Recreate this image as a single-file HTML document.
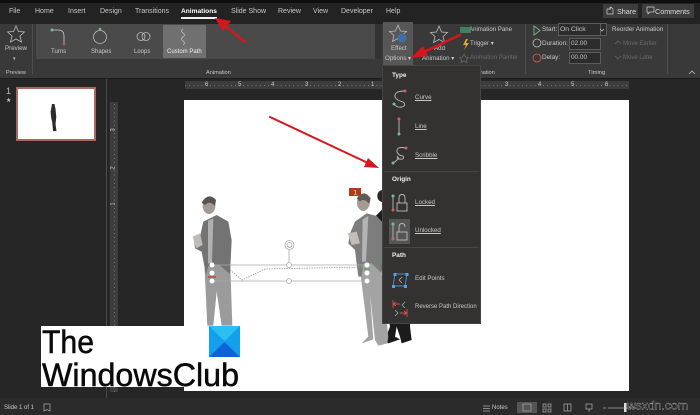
<!DOCTYPE html>
<html><head><meta charset="utf-8"><style>
html,body{margin:0;padding:0}
body{width:700px;height:415px;overflow:hidden;position:relative;background:#262626;font-family:"Liberation Sans",sans-serif;color:#c8c8c8}
.t{position:absolute;white-space:nowrap;font-size:6.4px;line-height:8px}
.tab{font-size:7px;top:8px}
.b{position:absolute}
.u{text-decoration:underline}
.tick{background-image:repeating-linear-gradient(90deg,#777 0,#777 1px,transparent 1px,transparent 4.160px);background-size:100% 1px;background-position:0 4px;background-repeat:no-repeat}
.vtick{background-image:repeating-linear-gradient(0deg,#777 0,#777 1px,transparent 1px,transparent 4.160px);background-size:1px 100%;background-position:4px 0;background-repeat:no-repeat}
</style></head><body>
<div class="b" style="left:0;top:0;width:700px;height:3px;background:#0e0e0e"></div>
<div class="b" style="left:0;top:3px;width:700px;height:21px;background:#232323"></div>
<div class="b" style="left:0;top:24px;width:700px;height:54px;background:#393939"></div>
<div class="b" style="left:0;top:78px;width:700px;height:1px;background:#1c1c1c"></div>
<!-- tabs -->
<div class="t tab" style="left:9px">File</div>
<div class="t tab" style="left:35px">Home</div>
<div class="t tab" style="left:68px">Insert</div>
<div class="t tab" style="left:100px">Design</div>
<div class="t tab" style="left:135px">Transitions</div>
<div class="t" style="left:181px;top:8px;color:#fff;font-weight:bold;font-size:6.600px">Animations</div>
<div class="b" style="left:181px;top:17px;width:36px;height:1.500px;background:#f2f2f2"></div>
<div class="t tab" style="left:231px">Slide Show</div>
<div class="t tab" style="left:278px">Review</div>
<div class="t tab" style="left:313px">View</div>
<div class="t tab" style="left:341px">Developer</div>
<div class="t tab" style="left:386px">Help</div>
<div class="b" style="left:603px;top:4px;width:35px;height:14px;background:#3d3d3d"></div>
<div class="t" style="left:617px;top:8px;font-size:7.200px;color:#ddd">Share</div>
<div class="b" style="left:642px;top:4px;width:52px;height:14px;background:#3d3d3d"></div>
<div class="t" style="left:655px;top:8px;font-size:7.200px;color:#ddd">Comments</div>
<!-- gallery -->
<div class="b" style="left:36px;top:24px;width:339px;height:35px;background:#4a4a4a"></div>
<div class="b" style="left:163px;top:25px;width:43px;height:33px;background:#707070"></div>
<div class="b" style="left:375px;top:24px;width:7px;height:35px;background:#333"></div>
<div class="b" style="left:32px;top:24px;width:1px;height:50px;background:#4f4f4f"></div>
<div class="b" style="left:383px;top:22px;width:30px;height:44px;background:#575757"></div>
<div class="t" style="left:5px;top:45px;font-size:6.200px">Preview</div>
<div class="t" style="left:13px;top:55px;font-size:5px">▾</div>
<div class="t" style="left:6px;top:69px;font-size:5.600px">Preview</div>
<div class="t" style="left:51px;top:48px;font-size:6px">Turns</div>
<div class="t" style="left:91px;top:48px;font-size:6px">Shapes</div>
<div class="t" style="left:134px;top:48px;font-size:6px">Loops</div>
<div class="t" style="left:167px;top:48px;font-size:6px;color:#eee">Custom Path</div>
<div class="t" style="left:206px;top:69px;font-size:5.600px">Animation</div>
<div class="t" style="left:391px;top:45px;font-size:6.200px">Effect</div>
<div class="t" style="left:385px;top:55px;font-size:6.200px">Options ▾</div>
<div class="t" style="left:434px;top:45px;font-size:6.200px">Add</div>
<div class="t" style="left:422px;top:55px;font-size:6.200px">Animation ▾</div>
<div class="t" style="left:469px;top:26px;font-size:6.100px">Animation Pane</div>
<div class="t" style="left:470px;top:40px;font-size:6.100px">Trigger ▾</div>
<div class="t" style="left:470px;top:54px;font-size:6.100px;color:#6a6a6a">Animation Painter</div>
<div class="t" style="left:470px;top:69px;font-size:5.600px">Animation</div>
<div class="b" style="left:525px;top:24px;width:1px;height:50px;background:#4f4f4f"></div>
<div class="b" style="left:667px;top:24px;width:1px;height:50px;background:#4f4f4f"></div>
<div class="t" style="left:542px;top:26px">Start:</div>
<div class="b" style="left:558px;top:23px;width:49px;height:13px;background:#2c2c2c;box-sizing:border-box;border:1px solid #5c5c5c"></div>
<div class="b" style="left:600px;top:23px;width:1px;height:13px;background:#5c5c5c"></div>
<div class="t" style="left:560px;top:26px;font-size:6.800px">On Click</div>
<div class="t" style="left:542px;top:40px">Duration:</div>
<div class="b" style="left:569px;top:38px;width:32px;height:12px;background:#2c2c2c;box-sizing:border-box;border:1px solid #5c5c5c"></div>
<div class="t" style="left:571px;top:40px">02.00</div>
<div class="t" style="left:542px;top:54px">Delay:</div>
<div class="b" style="left:569px;top:52px;width:32px;height:12px;background:#2c2c2c;box-sizing:border-box;border:1px solid #5c5c5c"></div>
<div class="t" style="left:571px;top:54px">00.00</div>
<div class="t" style="left:612px;top:26px;font-size:6.200px">Reorder Animation</div>
<div class="t" style="left:623px;top:40px;font-size:6px;color:#6a6a6a">Move Earlier</div>
<div class="t" style="left:623px;top:54px;font-size:6px;color:#6a6a6a">Move Later</div>
<div class="t" style="left:588px;top:69px;font-size:5.800px">Timing</div>
<!-- rulers -->
<div class="b tick" style="left:185px;top:81px;width:444px;height:8px;background-color:#3d3d3d"></div>
<div class="b vtick" style="left:110px;top:102px;width:8px;height:290px;background-color:#3d3d3d"></div>
<div class="b" style="left:106px;top:79px;width:1px;height:320px;background:#4a4a4a"></div>
<div class="t" style="left:205px;top:81px;font-size:6px">6</div>
<div class="t" style="left:238px;top:81px;font-size:6px">5</div>
<div class="t" style="left:271px;top:81px;font-size:6px">4</div>
<div class="t" style="left:305px;top:81px;font-size:6px">3</div>
<div class="t" style="left:338px;top:81px;font-size:6px">2</div>
<div class="t" style="left:371px;top:81px;font-size:6px">1</div>
<div class="t" style="left:505px;top:81px;font-size:6px">3</div>
<div class="t" style="left:538px;top:81px;font-size:6px">4</div>
<div class="t" style="left:571px;top:81px;font-size:6px">5</div>
<div class="t" style="left:605px;top:81px;font-size:6px">6</div>
<div class="t" style="left:112px;top:126px;font-size:6px;transform:rotate(-90deg)">3</div>
<div class="t" style="left:112px;top:164px;font-size:6px;transform:rotate(-90deg)">2</div>
<div class="t" style="left:112px;top:200px;font-size:6px;transform:rotate(-90deg)">1</div>
<!-- thumb -->
<div class="t" style="left:6px;top:87px;font-size:9px;color:#bbb">1</div>
<div class="t" style="left:6px;top:97px;font-size:6px">★</div>
<div class="b" style="left:16px;top:87px;width:80px;height:54px;box-sizing:border-box;border:2px solid #a5695c;background:#fff"></div>
<!-- slide -->
<div class="b" style="left:184px;top:100px;width:445px;height:291px;background:#fff"></div>
<div class="b" style="left:41px;top:326px;width:143px;height:61px;background:#fff"></div>
<!-- status -->
<div class="b" style="left:0;top:398px;width:700px;height:17px;background:#2b2b2b"></div>
<div class="t" style="left:4px;top:404px;font-size:6px">Slide 1 of 1</div>
<div class="t" style="left:492px;top:404px;font-size:6px">Notes</div>
<div class="b" style="left:517px;top:402px;width:20px;height:11px;background:#555"></div>

<svg class="b" style="left:0;top:0" width="700" height="415" viewBox="0 0 700 415">
<!-- thumb figure -->
<path d="M52 104h2.500l1 5 .8 8-.8 7 1 7h-3.500l-.8-9-1-4-.6-6z" fill="#2c2c2c"/>
<!-- top-right icons -->
<g fill="none" stroke="#ccc" stroke-width=".7">
<path d="M607 9h3l1-2 2 2v5h-6zM610 7v3"/>
<path d="M647 7h7v5h-4l-2 2v-2h-1z"/>
</g>
<!-- ribbon icons -->
<g fill="none" stroke="#bbb" stroke-width=".8">
<path d="M16 26l2.500 5.500 6 .5-4.500 4 1.500 6-5.500-3-5.500 3 1.500-6-4.500-4 6-.5z"/>
<path d="M52 30h6q6 0 6 6v7" stroke="#ccc"/>
<circle cx="100" cy="37" r="6.500"/>
<circle cx="141" cy="36.500" r="4"/><circle cx="146" cy="36.500" r="4"/>
<path d="M183 29q-3 2 0 4t0 4 0 4 0 4"/>
<path d="M398 25l2.500 6 6 .5-4.500 4 1.500 6-5.500-3-5.500 3 1.500-6-4.500-4 6-.5z"/>
<path d="M439 26l2.500 6 6 .5-4.500 4 1.500 6-5.500-3-5.500 3 1.500-6-4.500-4 6-.5z"/>
<path d="M464 54l1.500 3 3 .5-2 2 .5 3-3-1.500-3 1.500.5-3-2-2 3-.5z" stroke="#666"/>
<circle cx="537" cy="43" r="4"/>
<circle cx="537" cy="58" r="4" stroke="#e05a5a"/>
<path d="M615 44l3-3 3 3M615 56l3 3 3-3" stroke="#666"/>
<path d="M689 74l3-3 3 3M604 29l-2 2-2-2"/>
</g>
<path d="M534 26v9l6-4.500z" fill="none" stroke="#6fbf7f" stroke-width=".9"/>
<circle cx="52" cy="30" r="1.500" fill="#6fc08a"/><circle cx="64" cy="44" r="1.500" fill="#d04a4a"/>
<circle cx="100" cy="29" r="1.300" fill="#6fc08a"/>
<circle cx="402" cy="38" r="4.500" fill="#3f6fa8"/>
<path d="M460 27h11v6h-11z" fill="#3f8a62" opacity=".9"/>
<path d="M466 39l-3 6h3l-2 5 5-7h-3l2-4z" fill="#e0a52a"/>
<!-- figures -->
<g transform="translate(180 180) scale(.3333)">
  <!-- dark person behind -->
  <ellipse cx="608" cy="48" rx="16" ry="18" fill="#2a2623"/>
  <path d="M585 110L615 80L700 90V290L690 440L695 480L665 490L660 470L650 440L645 470L660 478L625 490L615 480L630 440L605 270L595 190Z" fill="#1b1b1b"/>
  <!-- left -->
  <path d="M72 230L150 230L157 437L125 437L110 335L100 437L82 437Z" fill="#9b9b9b"/>
  <path d="M70 125L110 105L145 125L155 180L150 282L118 255L85 258L78 285L65 215L45 205L42 180L60 170Z" fill="#737373"/>
  <path d="M84 122L100 115L96 250L84 250Z" fill="#b0b0b0"/>
  <path d="M38 170L60 160L68 195L48 205Z" fill="#c4bab4"/>
  <ellipse cx="87" cy="78" rx="19" ry="24" fill="#a39a94"/>
  <path d="M65 68Q85 35 108 60L105 78Q90 60 75 75Z" fill="#5a524c"/>
  <!-- right -->
  <path d="M535 230L600 230L625 470L622 490L595 497L585 480L570 340L580 478L545 490L565 470Z" fill="#a3a3a3"/>
  <path d="M525 125L560 100L590 108L610 130L605 280L575 250L550 250L545 290L535 290L525 210L505 190L510 160Z" fill="#7d7d7d"/>
  <path d="M548 118L565 108L558 245L546 245Z" fill="#b4b4b4"/>
  <path d="M503 160L530 155L540 190L515 195Z" fill="#c6bcb6"/>
  <ellipse cx="550" cy="68" rx="19" ry="25" fill="#a39a94"/>
  <path d="M530 55Q552 25 572 55L568 72Q552 52 540 65Z" fill="#625a54"/>
</g>
<rect x="349" y="188" width="12" height="8" fill="#b23a17"/>
<text x="353.500" y="194.500" font-size="6" fill="#fff" font-family="Liberation Sans">1</text>
<!-- selection -->
<g stroke="#aaa" fill="none" stroke-width=".8">
<path d="M212 265H367M212 281H367M289 265V250"/>
<path d="M230 270l12 10 23-11 100-2" stroke="#999" stroke-dasharray="1.500 1"/>
<circle cx="289.500" cy="245" r="4.500"/><circle cx="289.500" cy="245" r="2.500"/>
</g>
<g fill="#fff" stroke="#999" stroke-width=".6">
<circle cx="289" cy="265" r="2.500"/><circle cx="289" cy="281" r="2.500"/>
</g>
<g fill="#fff"><circle cx="212" cy="265" r="2.500"/><circle cx="212" cy="273" r="2.500"/><circle cx="212" cy="281" r="2.500"/><circle cx="367" cy="265" r="2.500"/><circle cx="367" cy="273" r="2.500"/><circle cx="367" cy="281" r="2.500"/></g>
<path d="M208 277h8" stroke="#d02a2a" stroke-width="1.200"/>
<path d="M364 269h6" stroke="#5aa05a" stroke-width="1.200"/>
<!-- logo -->
<path d="M209 326h31v31h-31z" fill="#12a0ee"/>
<path d="M209 326h31l-15.500 15z" fill="#2cc0f0"/>
<path d="M209 357l15.500-15 15.500 15z" fill="#0e63d8"/>
<text x="42" y="353" font-family="Liberation Sans" font-size="32" fill="#0a0a0a" stroke="#0a0a0a" stroke-width=".5" textLength="52" lengthAdjust="spacingAndGlyphs">The</text>
<text x="42" y="386" font-family="Liberation Sans" font-size="32" fill="#0a0a0a" stroke="#0a0a0a" stroke-width=".5" textLength="197" lengthAdjust="spacingAndGlyphs">WindowsClub</text>
<!-- status icons -->
<g fill="none" stroke="#aaa" stroke-width=".7">
<path d="M44 404h6v7l-3-1.500-3 1.500z"/>
<path d="M483 406h7M483 408.500h7M483 411h7"/>
<rect x="523" y="404" width="8" height="7"/>
<path d="M543 404h3v3h-3zM548 404h3v3h-3zM543 409h3v3h-3zM548 409h3v3h-3z"/>
<path d="M564 404h7v7h-7zM567.500 404v7"/>
<path d="M586 404h6v5h-6zM589 409v3"/>
<path d="M603 408h3M608 408h28"/>
</g>
<rect x="624" y="403" width="2.500" height="9" fill="#ddd"/>
<text x="627" y="409.500" font-family="Liberation Sans" font-size="12" fill="#111" stroke="#fff" stroke-width=".2" textLength="61" lengthAdjust="spacingAndGlyphs">wsxdn.com</text>
</svg>

<!-- menu -->
<div class="b" style="left:383px;top:66px;width:97px;height:257px;background:#333231;box-shadow:0 0 0 1px #454545"></div>
<div class="t" style="left:392px;top:72px;color:#eee;font-weight:bold">Type</div>
<div class="t u" style="left:415px;top:94px;font-size:6.200px">Curve</div>
<div class="t u" style="left:415px;top:123px;font-size:6.200px">Line</div>
<div class="t u" style="left:415px;top:152px;font-size:6.200px">Scribble</div>
<div class="b" style="left:384px;top:171px;width:95px;height:1px;background:#454545"></div>
<div class="t" style="left:392px;top:176px;color:#eee;font-weight:bold">Origin</div>
<div class="t u" style="left:415px;top:199px;font-size:6.200px">Locked</div>
<div class="b" style="left:389px;top:219px;width:21px;height:25px;background:#555"></div>
<div class="t u" style="left:415px;top:227px;font-size:6.200px">Unlocked</div>
<div class="b" style="left:384px;top:247px;width:95px;height:1px;background:#454545"></div>
<div class="t" style="left:392px;top:252px;color:#eee;font-weight:bold">Path</div>
<div class="t" style="left:415px;top:275px;font-size:6.200px">Edit Points</div>
<div class="t" style="left:415px;top:303px;font-size:6px">Reverse Path Direction</div>
<svg class="b" style="left:0;top:0" width="700" height="415" viewBox="0 0 700 415">
<g fill="none" stroke="#bbb" stroke-width=".9">
<path d="M405 91Q394 91 395 97Q396 100 403 102Q407 105 402 107Q397 108 394 104"/>
<path d="M399 119v15"/>
<path d="M406 148Q396 146 397 152Q399 156 403 156Q405 160 399 159Q396 154 398 159Q395 162 393 163"/>
<path d="M393 196v14"/>
<rect x="397" y="203" width="10" height="8"/><path d="M399 203v-5q0-3.500 3-3.500t3 3.500v5"/>
<path d="M393 224v15"/>
<rect x="397" y="232" width="10" height="8"/><path d="M399 232v-5q0-3.500 3-3.500t3 3.500"/>
</g>
<g fill="#d06070"><circle cx="405" cy="91" r="1.500"/><circle cx="399" cy="119" r="1.500"/><circle cx="406" cy="148" r="1.500"/><circle cx="393" cy="210" r="1.500"/><circle cx="393" cy="239" r="1.500"/></g>
<g fill="#70c090"><circle cx="394" cy="104" r="1.500"/><circle cx="399" cy="134" r="1.500"/><circle cx="393" cy="163" r="1.500"/><circle cx="393" cy="196" r="1.500"/><circle cx="393" cy="224" r="1.500"/></g>
<path d="M395 274h12l-2 12h-12z" fill="none" stroke="#4a90d0" stroke-width=".9"/>
<path d="M402 277l-3 3 3 3" fill="none" stroke="#bbb" stroke-width=".7"/>
<g fill="#5aa0e0"><rect x="393.500" y="273" width="3" height="3"/><rect x="405.500" y="273" width="3" height="3"/><rect x="392" y="285" width="3" height="3"/><rect x="404" y="285" width="3" height="3"/></g>
<path d="M393 304h7M393 304l3-2M393 304l3 2M393 300v8M400 313h7M407 313l-3-2M407 313l-3 2M407 309v8" stroke="#d05050" fill="none" stroke-width=".9"/>
<path d="M405 302l-3 3 3 3M395 310l3 3-3 3" stroke="#70c090" fill="none" stroke-width=".8"/>
<!-- red arrows -->
<g fill="#d9151c" stroke="#d9151c" stroke-linecap="round">
<path d="M245 42L224 25" stroke-width="2.400" fill="none"/><path d="M215 18l16 3-8 10z" stroke="none"/>
<path d="M460 35L424 52" stroke-width="2.600" fill="none"/><path d="M411 58l12-12 5 10z" stroke="none"/>
<path d="M270 117L368 163" stroke-width="2" fill="none"/><path d="M379 168l-15-1 4-9z" stroke="none"/>
</g>
</svg>
</body></html>
